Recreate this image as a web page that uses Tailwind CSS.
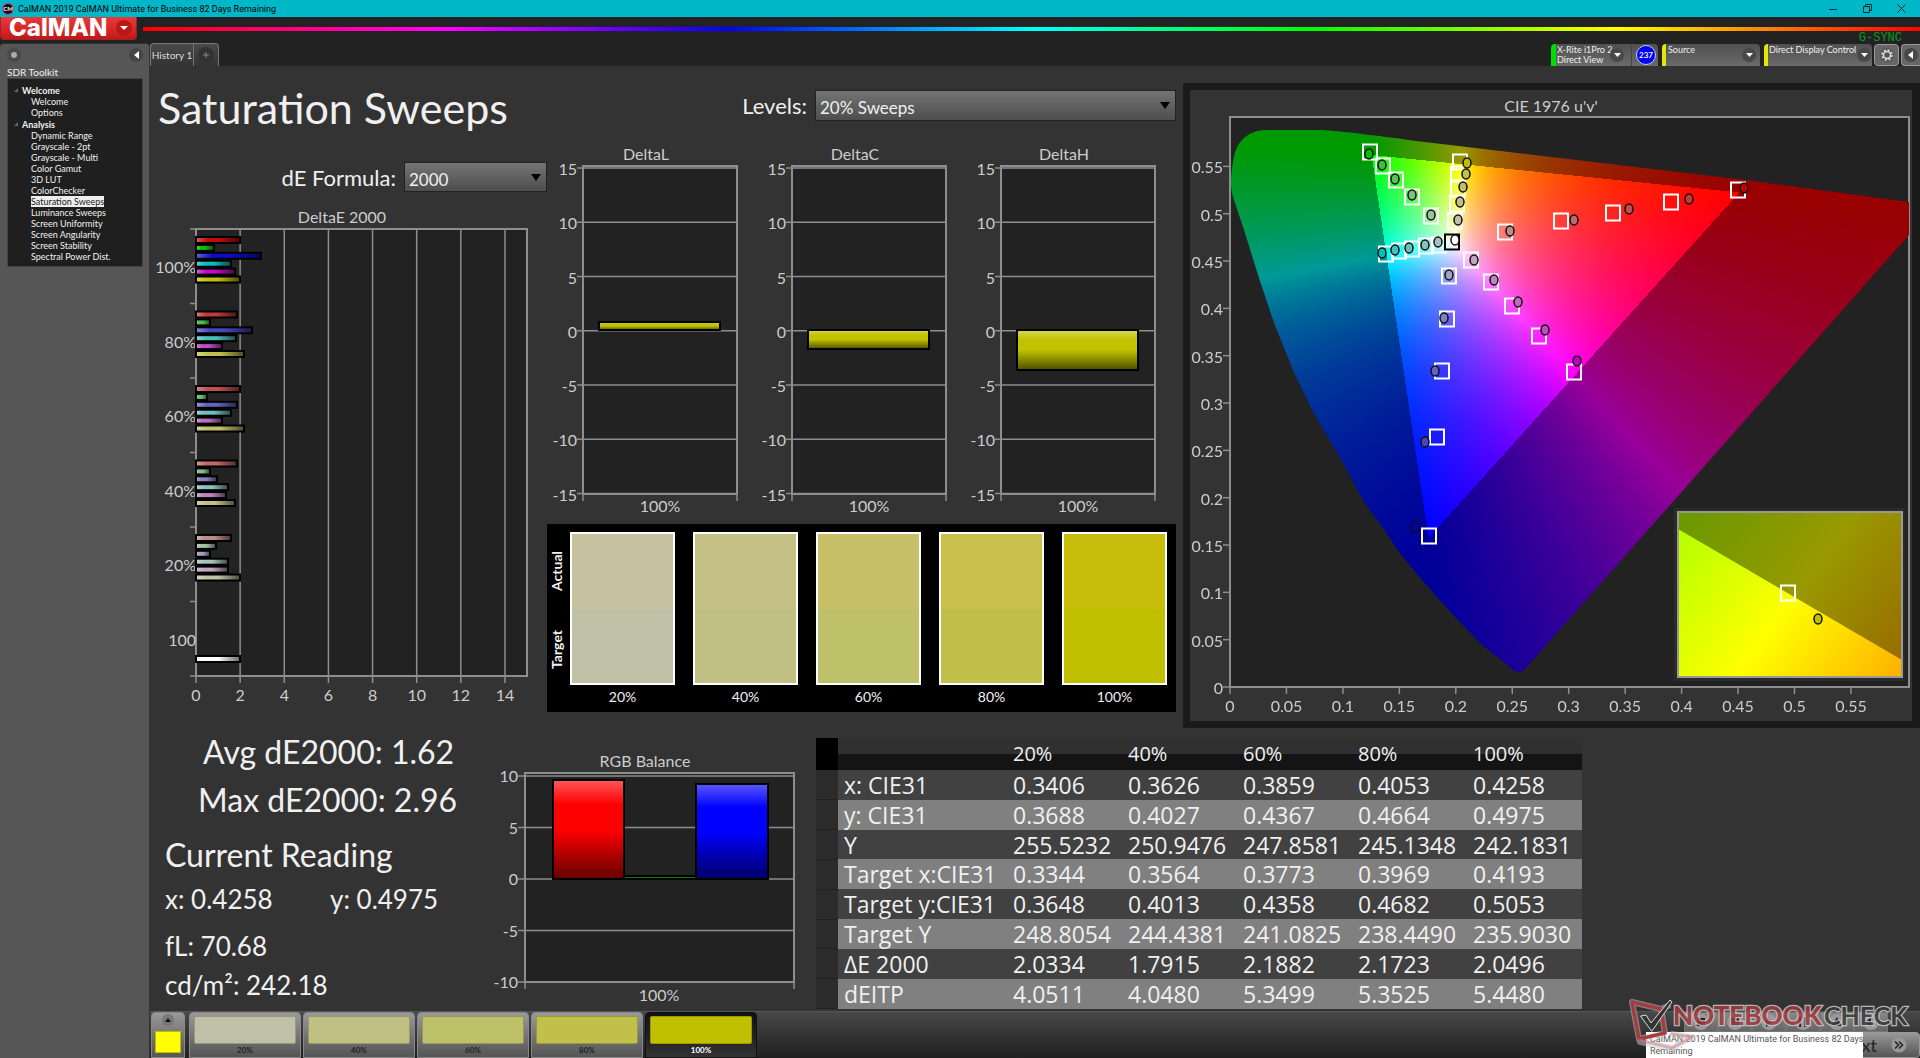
<!DOCTYPE html>
<html lang="en">
<head>
<meta charset="utf-8">
<title>CalMAN 2019</title>
<script src="https://cdn.jsdelivr.net/npm/@tailwindcss/browser@4"></script>
</head>
<body class="flex min-h-screen flex-col overflow-x-hidden bg-[#222] font-['Lato',sans-serif] text-[#f0f0f0]">

<!-- window title bar -->
<header class="flex h-[17px] items-center bg-[#00b7c7] pl-0.5 text-black">
  <svg class="size-3" viewBox="0 0 12 12"><circle cx="6" cy="6" r="6" fill="#d6359b"/><circle cx="6" cy="6" r="5" fill="#111"/><text x="6" y="8" font-size="6" font-weight="700" fill="#fff" text-anchor="middle">CM</text></svg>
  <span class="ml-1 font-['Roboto',sans-serif] text-[9px] leading-4">CalMAN 2019 CalMAN Ultimate for Business 82 Days Remaining</span>
  <div class="mr-3 ml-auto flex gap-[20px]">
    <button aria-label="Minimize" class="flex size-[14px] items-center justify-center"><svg width="8" height="8" viewBox="0 0 8 8"><path d="M0 4.5h8" stroke="#052b30"/></svg></button>
    <button aria-label="Restore" class="flex size-[14px] items-center justify-center"><svg width="9" height="9" viewBox="0 0 9 9" fill="none" stroke="#052b30"><path d="M.5 2.5h6v6h-6zM2.500 2.500v-2h6v6h-2"/></svg></button>
    <button aria-label="Close" class="flex size-[14px] items-center justify-center"><svg width="9" height="9" viewBox="0 0 9 9" stroke="#052b30"><path d="M.5.5l8 8M8.500.5l-8 8"/></svg></button>
  </div>
</header>

<!-- brand and spectrum line -->
<div class="flex h-[26px] items-start gap-1.5">
  <button class="flex h-[23px] w-[137px] items-center justify-between rounded-b-sm border border-t-0 border-[#8d2a2a] bg-linear-to-b from-[#e83a3a] to-[#c81414] pr-1 pl-2">
    <span class="font-['Inter',sans-serif] text-2xl leading-5 font-extrabold text-white">CalMAN</span>
    <span class="flex size-4 items-center justify-center rounded-full bg-[#b81818]"><svg width="8" height="4" viewBox="0 0 8 4"><path d="M0 0h8l-4 4z" fill="#fff"/></svg></span>
  </button>
  <div class="mt-[10px] h-1 flex-1 bg-[linear-gradient(90deg,#f00,#f0f_17%,#00f_33%,#0ff_50%,#0f0_66%,#ff0_83%,#f00)]"></div>
</div>

<div class="flex flex-1">
  <!-- workflow sidebar -->
  <aside class="w-[150px] shrink-0 rounded-t border-t border-r border-[#333] bg-[#565656] pr-1.5 pl-[7px]">
    <div class="flex h-[22px] items-center justify-between">
      <button aria-label="Record" class="flex size-[14px] items-center justify-center rounded-full bg-[#4a4a4a]"><span class="size-1.5 rounded-full bg-[#aaa]"></span></button>
      <button aria-label="Collapse" class="flex size-[14px] items-center justify-center rounded-full bg-[#454545]"><svg width="5" height="8" viewBox="0 0 5 8"><path d="M5 0v8l-5-4z" fill="#fff"/></svg></button>
    </div>
    <h2 class="text-[10px] leading-3">SDR Toolkit</h2>
    <nav id="tree" class="border border-[#444] bg-[#1f1f1f] pt-[5px] pb-1 text-[9px] leading-[11px]"></nav>
  </aside>

  <main class="flex min-w-0 flex-1 flex-col">
    <!-- tabs and device bar -->
    <div class="flex h-[23px] items-end justify-between">
      <div class="flex h-[23px] rounded-t border border-b-0 border-[#777] bg-linear-to-b from-[#4a4a4a] to-[#333] text-[10px]">
        <button class="w-[43px] border-r border-[#777] whitespace-nowrap text-[#ddd]">History 1</button>
        <button aria-label="Add tab" class="flex w-[24px] items-center justify-center"><span class="flex size-4 items-center justify-center rounded-full bg-[#333]"><svg width="6" height="6" viewBox="0 0 6 6" stroke="#888"><path d="M3 0v6M0 3h6"/></svg></span></button>
      </div>
      <div class="relative flex h-[22px] text-[9px] leading-[10px]">
        <span class="absolute -top-3 right-[18px] font-['Liberation_Mono',monospace] text-xs leading-3 text-[#0a9a1a]">G-SYNC</span>
        <button class="mr-1 flex w-[107px] rounded-t border-l-5 border-[#0d0] bg-linear-to-b from-[#505050] to-[#6a6a6a] pr-0.5 text-left">
          <span class="mt-px w-[52px] pl-px whitespace-nowrap">X-Rite i1Pro 2<br>Direct View</span>
          <span class="mt-1 ml-0.5 flex size-[14px] items-center justify-center rounded-full bg-[#484848]"><svg width="7" height="4" viewBox="0 0 7 4"><path d="M0 0h7l-3.500 4z" fill="#fff"/></svg></span>
          <span class="ml-auto h-full w-px bg-[#444]"></span>
          <span class="mt-px ml-1 flex size-5 items-center justify-center rounded-full border border-[#ccd] bg-[#00f] text-[8px] font-bold">237</span>
        </button>
        <button class="mr-1 flex w-[98px] justify-between rounded-t border-l-4 border-[#e6e600] bg-linear-to-b from-[#505050] to-[#6a6a6a] pr-1 text-left">
          <span class="mt-px pl-0.5">Source</span>
          <span class="mt-1 flex size-[14px] items-center justify-center rounded-full bg-[#484848]"><svg width="7" height="4" viewBox="0 0 7 4"><path d="M0 0h7l-3.500 4z" fill="#fff"/></svg></span>
        </button>
        <button class="mr-0.5 flex w-[108px] justify-between rounded-t border-l-4 border-[#e6e600] bg-linear-to-b from-[#505050] to-[#6a6a6a] text-left">
          <span class="mt-px pl-px whitespace-nowrap">Direct Display Control</span>
          <span class="mt-1 mr-px flex size-[14px] shrink-0 items-center justify-center rounded-full bg-[#484848]"><svg width="7" height="4" viewBox="0 0 7 4"><path d="M0 0h7l-3.500 4z" fill="#fff"/></svg></span>
        </button>
        <button aria-label="Settings" class="mr-0.5 flex w-[25px] items-center justify-center rounded border border-[#999] bg-[#666]"><svg width="14" height="14" viewBox="0 0 14 14"><circle cx="7" cy="7" r="7" fill="#555"/><circle cx="7" cy="7" r="3.500" fill="none" stroke="#ddd" stroke-width="1.500"/><circle cx="7" cy="7" r="5" fill="none" stroke="#ddd" stroke-width="1.500" stroke-dasharray="2 1.927"/></svg></button>
        <button aria-label="Hide" class="flex w-[19px] items-center justify-center rounded-l border border-r-0 border-[#999] bg-[#666]"><svg width="14" height="14" viewBox="0 0 14 14"><circle cx="7" cy="7" r="7" fill="#484848"/><path d="M9 3v8l-5-4z" fill="#fff"/></svg></button>
      </div>
    </div>

    <!-- workspace -->
    <div class="flex-1 bg-[#333]">
      <div class="flex">
        <section class="w-[1033px] shrink-0">
          <div class="flex h-[76px] items-start justify-between pt-6 pr-[7px] pl-2">
            <h1 class="text-[43px] leading-9">Saturation Sweeps</h1>
            <div class="flex items-start gap-2">
              <label for="levels" class="text-[22px] leading-8">Levels:</label>
              <div class="relative">
                <select id="levels" class="h-[31px] w-[361px] appearance-none border border-[#222] bg-linear-to-b from-[#747474] to-[#4e4e4e] pt-1 pl-1 text-[17px]"><option>20% Sweeps</option></select>
                <svg class="pointer-events-none absolute top-3 right-1.5" width="10" height="7" viewBox="0 0 10 7"><path d="M0 0h10l-5 7z"/></svg>
              </div>
            </div>
          </div>
          <div class="flex">
            <div class="w-[397px]">
              <div class="mt-5 flex h-[30px] items-center justify-end gap-2">
                <label for="formula" class="text-[22px]">dE Formula:</label>
                <div class="relative">
                  <select id="formula" class="h-[30px] w-[143px] appearance-none border border-[#222] bg-linear-to-b from-[#747474] to-[#4e4e4e] pt-1 pl-1 text-[17px]"><option>2000</option></select>
                  <svg class="pointer-events-none absolute top-3 right-1.5" width="10" height="7" viewBox="0 0 10 7"><path d="M0 0h10l-5 7z"/></svg>
                </div>
              </div>
              <svg id="deltaE" class="mt-2" width="397" height="512" viewBox="0 0 397 512" font-size="16" fill="#ccc"></svg>
            </div>
            <div class="w-[629px]">
              <div id="deltas" class="flex"></div>
              <div class="mt-2 flex h-[188px] bg-black pt-2">
                <div class="flex w-[23px] flex-col items-center justify-around pr-1 pb-6 text-sm font-bold">
                  <span class="rotate-180 leading-4 [writing-mode:vertical-rl]">Actual</span>
                  <span class="rotate-180 leading-4 [writing-mode:vertical-rl]">Target</span>
                </div>
                <div id="swatches" class="flex gap-[18px]"></div>
              </div>
            </div>
          </div>
        </section>

        <!-- chromaticity diagram -->
        <section class="mt-[17px] min-w-0 flex-1 border-[7px] border-r-8 border-[#1a1a1a]">
          <svg id="cie" class="block h-auto w-full" viewBox="0 0 722 631" font-size="16" fill="#ccc"></svg>
        </section>
      </div>

      <div class="flex pt-2.5">
        <section class="w-[335px] shrink-0 pl-[15px]">
          <p class="pl-[38px] text-[32px] leading-7">Avg dE2000: 1.62</p>
          <p class="mt-5 pl-[33px] text-[32px] leading-7">Max dE2000: 2.96</p>
          <h2 class="mt-[27px] text-[32px] leading-7">Current Reading</h2>
          <p class="mt-4 flex text-[26px] leading-7"><span class="w-[165px]">x: 0.4258</span><span>y: 0.4975</span></p>
          <p class="mt-[19px] text-[26px] leading-7">fL: 70.68</p>
          <p class="mt-[11px] text-[26px] leading-7">cd/m²: 242.18</p>
        </section>
        <svg id="rgb" class="mt-2.5 shrink-0" width="331" height="260" viewBox="0 0 331 260" font-size="16" fill="#ccc"></svg>
        <table class="h-[271px] w-[766px] table-fixed border-collapse text-left font-['Open_Sans',sans-serif] text-[23px] leading-[26px]">
          <colgroup><col class="w-[22px]"><col class="w-[169px]"><col class="w-[115px]"><col class="w-[115px]"><col class="w-[115px]"><col class="w-[115px]"><col class="w-[115px]"></colgroup>
          <thead><tr class="h-[32px] bg-linear-to-b from-[#303030] from-50% to-[#141414] to-50% text-xl leading-[26px]"><td class="bg-black"></td><th></th><th class="pl-1.5 font-normal">20%</th><th class="pl-1.5 font-normal">40%</th><th class="pl-1.5 font-normal">60%</th><th class="pl-1.5 font-normal">80%</th><th class="pl-1.5 font-normal">100%</th></tr></thead>
          <tbody id="rows"></tbody>
        </table>
      </div>
    </div>

    <!-- pattern bar -->
    <footer class="relative flex h-[47px] border-t border-[#555] bg-linear-to-b from-[#484848] to-[#202020]">
      <button aria-label="Pattern" class="ml-px flex w-[34px] flex-col items-center justify-between rounded-t border border-[#888] bg-linear-to-b from-[#999] to-[#555] pb-1">
        <svg class="mt-px" width="12" height="12" viewBox="0 0 12 12"><circle cx="6" cy="6" r="6" fill="#777"/><path d="M3 8h6l-3-4z" fill="#111"/></svg>
        <span class="h-[22px] w-[26px] border border-[#bb0] bg-[#ff0]"></span>
      </button>
      <div id="patterns" class="ml-1 flex gap-0.5"></div>
      <div class="ml-auto flex w-[240px] flex-col">
        <div class="flex h-5 pl-1 text-[#222]" id="transport"></div>
        <button aria-label="Next" class="flex flex-1 items-center justify-end gap-[14px] rounded border border-[#999] bg-linear-to-b from-[#999] to-[#555] pr-3 text-lg leading-5 text-[#222]">xt
          <svg width="16" height="16" viewBox="0 0 16 16"><circle cx="8" cy="8" r="7.500" fill="#999"/><path d="M4 4.500l3.500 3.500l-3.500 3.500M8 4.500l3.500 3.500l-3.500 3.500" stroke="#222" stroke-width="1.500" fill="none"/></svg>
        </button>
      </div>

      <div role="tooltip" class="absolute right-[57px] bottom-0 h-[26px] w-[217px] bg-white pt-px pl-1 font-['Roboto',sans-serif] text-[9px] leading-3 whitespace-nowrap text-[#555]">CalMAN 2019 CalMAN Ultimate for Business 82 Days<br>Remaining</div>

      <!-- publisher mark -->
      <svg class="pointer-events-none absolute right-0 bottom-0" width="294" height="66" viewBox="0 0 294 66" fill="none">
        <g stroke-linejoin="round" stroke-linecap="round">
          <path d="M6 10L35 17L42 14M6 10L13 47L39 41L35 17M13 47L14 50L46 56L66 45L46 42" stroke="#ccc" stroke-width="6" opacity=".5"/>
          <path d="M6 10L35 17M6 10L13 47L39 41L35 17" stroke="#a33b3f" stroke-width="3.500"/>
          <path d="M13 48L46 56L66 45L46 42" stroke="#c9797b" stroke-width="3" opacity=".5"/>
          <path d="M15 24L20 23L25 31L44 8L46 10L26 39Z" fill="#333" stroke="#ddd"/>
        </g>
        <g font-family="Lato" font-weight="900" stroke="#ccc" paint-order="stroke" stroke-width="2.500" opacity=".85">
          <text x="47" y="33" font-size="26" fill="#a33b3f">NOTEBOOK</text><text x="198" y="33" fill="#3a3a3a" font-size="25" font-weight="700">CHECK</text>
        </g>
      </svg>
    </footer>
  </main>
</div>

<script>
const $ = id => document.getElementById(id);

// workflow tree
const tree = [['Welcome', ['Welcome', 'Options']], ['Analysis', ['Dynamic Range', 'Grayscale - 2pt', 'Grayscale - Multi', 'Color Gamut', '3D LUT', 'ColorChecker', 'Saturation Sweeps', 'Luminance Sweeps', 'Screen Uniformity', 'Screen Angularity', 'Screen Stability', 'Spectral Power Dist.']]];
$('tree').innerHTML = tree.map(([g, items]) =>
  `<div class="flex h-3 items-center gap-1 pl-1.5 font-bold"><svg width="4" height="4" viewBox="0 0 4 4"><path d="M4 0v4h-4z" fill="#666"/></svg>${g}</div>` +
  items.map(t => `<a href="#" class="block pl-[23px] whitespace-nowrap"><span class="${t === 'Saturation Sweeps' ? 'bg-[#eee] text-[#222]' : ''}">${t}</span></a>`).join('')).join('');

const line = (x1, y1, x2, y2, w = 1.5, c = '#8e8e8e') => `<path d="M${x1} ${y1}L${x2} ${y2}" stroke="${c}" stroke-width="${w}"/>`;
const text = (x, y, s, a = 'middle') => `<text x="${x}" y="${y}" text-anchor="${a}">${s}</text>`;
const frame = (x, y, w, h) => `<rect x="${x}" y="${y}" width="${w}" height="${h}" fill="#222" stroke="#8e8e8e" stroke-width="2"/>`;
const shade = (id, dir) => `<linearGradient id="${id}" ${dir}><stop offset="0" stop-color="#fff" stop-opacity=".35"/><stop offset=".25" stop-color="#fff" stop-opacity="0"/><stop offset=".5" stop-color="#000" stop-opacity="0"/><stop offset="1" stop-color="#000" stop-opacity=".6"/></linearGradient>`;
const bar = (x, y, w, h, c, g) => `<rect x="${x}" y="${y}" width="${w}" height="${h}" fill="${c}"/><rect x="${x}" y="${y}" width="${w}" height="${h}" fill="url(#${g})" stroke="#000" stroke-width="2"/>`;

// DeltaE chart
{
  const groups = [
    ['100%', [45, 19, 66, 36, 40, 45], ['#c00d0d', '#0dbf0d', '#0d0dc8', '#0dbfbf', '#bf0dbf', '#bfbf0d']],
    ['80%', [42, 15, 57, 41, 27, 49], ['#c03a3a', '#4ac04a', '#4646c0', '#4abfbf', '#c04ac0', '#c0c04a']],
    ['60%', [45, 12, 42, 36, 27, 49], ['#c05050', '#6ac06a', '#6464c0', '#6abfbf', '#c06ac0', '#c0c06a']],
    ['40%', [42, 15, 22, 33, 31, 40], ['#c06a6a', '#85c085', '#8080c0', '#8abfbf', '#c085c0', '#c0c085']],
    ['20%', [36, 21, 15, 33, 33, 45], ['#c08a8a', '#a3c0a3', '#a0a0c0', '#a6c0c0', '#c0a6c0', '#c0c0a6']]];
  let s = shade('gh', '') + text(192, 23, 'DeltaE 2000') + frame(46, 29, 331, 447);
  for (let v = 0; v <= 14; v += 2) { const x = 46 + v * 22.07; s += line(x, 29, x, 483) + text(x, 501, v); }
  for (let i = 0; i <= 6; i++) s += line(40, 29 + i * 74.5, 46, 29 + i * 74.5);
  groups.forEach(([n, ws, cs], i) => {
    s += text(46, 73 + i * 74.5, n, 'end');
    ws.forEach((w, j) => s += bar(46, 37 + i * 74.5 + j * 7.9, w - 1, 6, cs[j], 'gh'));
  });
  s += text(46, 446, '100', 'end') + bar(46, 456, 44, 6, '#fff', 'gh');
  $('deltaE').innerHTML = s;
}

// DeltaL, DeltaC and DeltaH charts
$('deltas').innerHTML = [['DeltaL', 180, 8], ['DeltaC', 188, 19], ['DeltaH', 188, 40]].map(([n, y, h]) => {
  let s = shade('gv' + n, 'x2="0" y2="1"') + text(99, 18, n) + frame(36, 24, 154, 328);
  for (let v = 15; v >= -15; v -= 5) { const ly = 26 + (15 - v) * 10.85; s += line(30, ly, 190, ly) + text(30, ly + 7, v, 'end'); }
  s += line(36, 351, 36, 359) + line(190, 351, 190, 359) + text(113, 370, '100%') + bar(52, y, 121, h, '#c2c200', 'gv' + n);
  return `<svg width="209" height="374" viewBox="0 0 209 374" font-size="16" fill="#ccc">${s}</svg>`;
}).join('');

// RGB balance chart
{
  let s = shade('gr', 'x2="0" y2="1"') + text(160, 19, 'RGB Balance') + frame(40, 25, 269, 209);
  for (let v = 10; v >= -10; v -= 5) { const y = 28 + (10 - v) * 10.3; s += line(33, y, 309, y) + text(33, y + 6, v, 'end'); }
  s += line(40, 234, 40, 241) + line(309, 234, 309, 241) + text(174, 253, '100%');
  s += bar(68, 32, 71, 99, '#f00', 'gr') + bar(139, 128, 72, 3, '#008000', 'gr') + bar(211, 36, 72, 95, '#00f', 'gr');
  $('rgb').innerHTML = s;
}

// swatches and pattern buttons
const levels = ['20%', '40%', '60%', '80%', '100%'];
const actual = ['#c7c2a0', '#c5c186', '#c7c069', '#c8c04b', '#c7bd0a'];
const target = ['#bfc0a6', '#c0c085', '#bfc06a', '#c0c04a', '#c0c000'];
$('swatches').innerHTML = levels.map((l, i) => `<div class="w-[105px] text-center text-sm"><div class="h-[153px] border-2 border-white"><div class="h-1/2" style="background:${actual[i]}"></div><div class="h-1/2" style="background:${target[i]}"></div></div><div class="pt-0.5">${l}</div></div>`).join('');
$('patterns').innerHTML = levels.map((l, i) => `<button class="flex w-[112px] flex-col items-center justify-between rounded-t border px-1 pt-[3px] pb-0.5 text-[8px] leading-[10px] font-bold ${i === 4 ? 'border-[#111] bg-linear-to-b from-[#111] to-[#333] text-white' : 'border-[#888] bg-linear-to-b from-[#999] to-[#555] text-[#222]'}"><span class="h-[28px] w-full rounded-xs border border-black/20" style="background:${target[i]}"></span>${l}</button>`).join('');
$('transport').innerHTML = ['M4 4h8v8h-8z', 'M4 4h8v8h-8z', 'M5 3l7 5l-7 5z', 'M4 3h2v10h-2zM9 3h2v10h-2z', 'M8 3l5 9h-10z', 'M3 8l5 -5v10z'].map(d => `<button aria-label="Transport" class="flex w-[34px] items-center justify-center border border-[#777] bg-linear-to-b from-[#888] to-[#666]"><svg width="16" height="16" viewBox="0 0 16 16"><circle cx="8" cy="8" r="8" fill="#999"/><path d="${d}" fill="#222"/></svg></button>`).join('');

// readings table
$('rows').innerHTML = `x: CIE31|0.3406|0.3626|0.3859|0.4053|0.4258
y: CIE31|0.3688|0.4027|0.4367|0.4664|0.4975
Y|255.5232|250.9476|247.8581|245.1348|242.1831
Target x:CIE31|0.3344|0.3564|0.3773|0.3969|0.4193
Target y:CIE31|0.3648|0.4013|0.4358|0.4682|0.5053
Target Y|248.8054|244.4381|241.0825|238.4490|235.9030
ΔE 2000|2.0334|1.7915|2.1882|2.1723|2.0496
dEITP|4.0511|4.0480|5.3499|5.3525|5.4480`.split('\n').map((r, i) => `<tr class="${i % 2 ? 'bg-[#808080]' : 'bg-[#414141]'}"><td class="border-b border-[#222] bg-[#2b2b2b]"></td>${r.split('|').map((c, j) => j ? `<td class="pl-1.5">${c}</td>` : `<th class="pl-1.5 font-normal whitespace-nowrap">${c}</th>`).join('')}</tr>`).join('');

// chromaticity diagram
{
  const locus = 'M1 66C1 56 3 39 7 30C12 20 22 13 37 13L92 13C110 14 160 20 186 24L516 63L679 85V118L295 552C292 556 284 556 280 550L252 528L226 501L205 478L186 456L169 435L153 411L134 385L113 346L82 293L63 253L44 206L28 158L14 113L5 86Q1 76 1 66Z';
  let s = text(361, 22, "CIE 1976 u'v'") + frame(40, 27, 679, 570) + '<foreignObject x="40" y="27" width="679" height="570"><canvas id="gamut" width="679" height="570" style="display:block"></canvas></foreignObject>';
  s += line(40, 597, 719, 597, 2) + line(40, 27, 40, 597, 2);
  for (let i = 0; i <= 11; i++) {
    const x = 40 + i * 56.45, y = 597 - i * 47.33, n = +(i * .05).toFixed(2);
    s += line(x, 597, x, 604) + text(x, 622, n) + line(33, y, 40, y) + text(33, y + 7, n, 'end');
  }
  // targets as squares, readings as filled circles
  const squares = [[140,35],[153,49],[166,63],[182,80],[201,99],[230,45],[228,57],[228,71],[227,87],[225,104],[508,73],[441,85],[383,96],[331,104],[275,115],[156,137],[169,134],[182,132],[196,129],[209,128],[219,159],[217,202],[212,254],[207,320],[199,419],[241,143],[261,165],[282,189],[309,219],[344,255]];
  const circles = [[139,37,'#00bf00'],[152,48,'#3cc03c'],[165,62,'#5cc05c'],[182,78,'#80c080'],[201,98,'#a0c0a0'],[237,46,'#bfbf00'],[236,57,'#c0c04a'],[233,70,'#c0c06a'],[230,85,'#c0c085'],[228,103,'#c0c0a6'],[225,123,'#fff'],[152,136,'#00bfbf'],[165,133,'#4abfbf'],[179,131,'#6abfbf'],[195,128,'#8abfbf'],[208,125,'#a6c0c0'],[280,114,'#c08a8a'],[344,103,'#c06a6a'],[399,92,'#c05050'],[459,82,'#c03a3a'],[514,71,'#c00000'],[219,158,'#a0a0c0'],[214,201,'#8080c0'],[205,254,'#6464c0'],[195,325,'#4646c0'],[185,410,'#0000b0'],[244,143,'#c0a6c0'],[264,163,'#c085c0'],[288,185,'#c06ac0'],[315,213,'#c04ac0'],[347,244,'#c000c0']];
  const sq = (x, y, c = '#fff', r = 7) => `<rect x="${x - r}" y="${y - r - .5}" width="${2 * r}" height="${2 * r + 1}" fill="none" stroke="${c}" stroke-width="2"/>`;
  const ci = (x, y, c) => `<ellipse cx="${x}" cy="${y}" rx="4" ry="5" fill="${c}" stroke="#111" stroke-width="1.500"/>`;
  s += `<g transform="translate(40 27)">${squares.map(p => sq(...p)).join('')}${sq(222, 125, '#000')}${circles.map(p => ci(...p)).join('')}</g>`;
  // magnified view of the selected point
  const grad = (id, a, b, c) => `<linearGradient id="${id}" gradientUnits="userSpaceOnUse" x1="497" y1="427" x2="711" y2="587"><stop offset="0" stop-color="${a}"/><stop offset=".5" stop-color="${b}"/><stop offset="1" stop-color="${c}"/></linearGradient>`;
  s += grad('in', '#b4ff00', '#ffff00', '#ffb000') + grad('out', '#6c9900', '#999900', '#996900');
  s += '<rect x="484" y="418" width="231" height="173" fill="#2b2b2b"/><rect x="488" y="422" width="224" height="165" fill="url(#out)"/><path d="M488 439L712 570V587H488Z" fill="url(#in)"/><rect x="488" y="422" width="224" height="165" fill="none" stroke="#999" stroke-width="2"/>';
  s += sq(598, 503) + ci(628, 529, '#bfbf00');
  $('cie').innerHTML = s;

  const cv = $('gamut'), ctx = cv.getContext('2d'), W = 679, H = 570;
  const off = document.createElement('canvas'); off.width = W; off.height = H;
  const octx = off.getContext('2d'), img = octx.createImageData(W, H);
  const tri = [[.4507, .5229], [.125, .5625], [.1754, .1579]];
  const side = (p, a, b) => (b[0] - a[0]) * (p[1] - a[1]) - (b[1] - a[1]) * (p[0] - a[0]);
  for (let j = 0; j < H; j++) for (let i = 0; i < W; i++) {
    const u = i / 1129, v = (H - j) / 946.7, d = 6 * u - 16 * v + 12, x = 9 * u / d, y = Math.max(4 * v / d, 1e-4), z = 1 - x - y;
    let c = [3.2406 * x - 1.5372 * y - .4986 * z, -.9689 * x + 1.8758 * y + .0415 * z, .0557 * x - .204 * y + 1.057 * z].map(t => Math.max(t, 0));
    const m = Math.max(...c), p = [u, v];
    const inside = side(p, tri[0], tri[1]) >= 0 && side(p, tri[1], tri[2]) >= 0 && side(p, tri[2], tri[0]) >= 0;
    c = c.map(t => t / m * 255 * (inside ? 1 : .6));
    img.data.set([c[0], c[1], c[2], 255], (j * W + i) * 4);
  }
  octx.putImageData(img, 0, 0);
  ctx.clip(new Path2D(locus));
  ctx.drawImage(off, 0, 0);
}
</script>
</body>
</html>
